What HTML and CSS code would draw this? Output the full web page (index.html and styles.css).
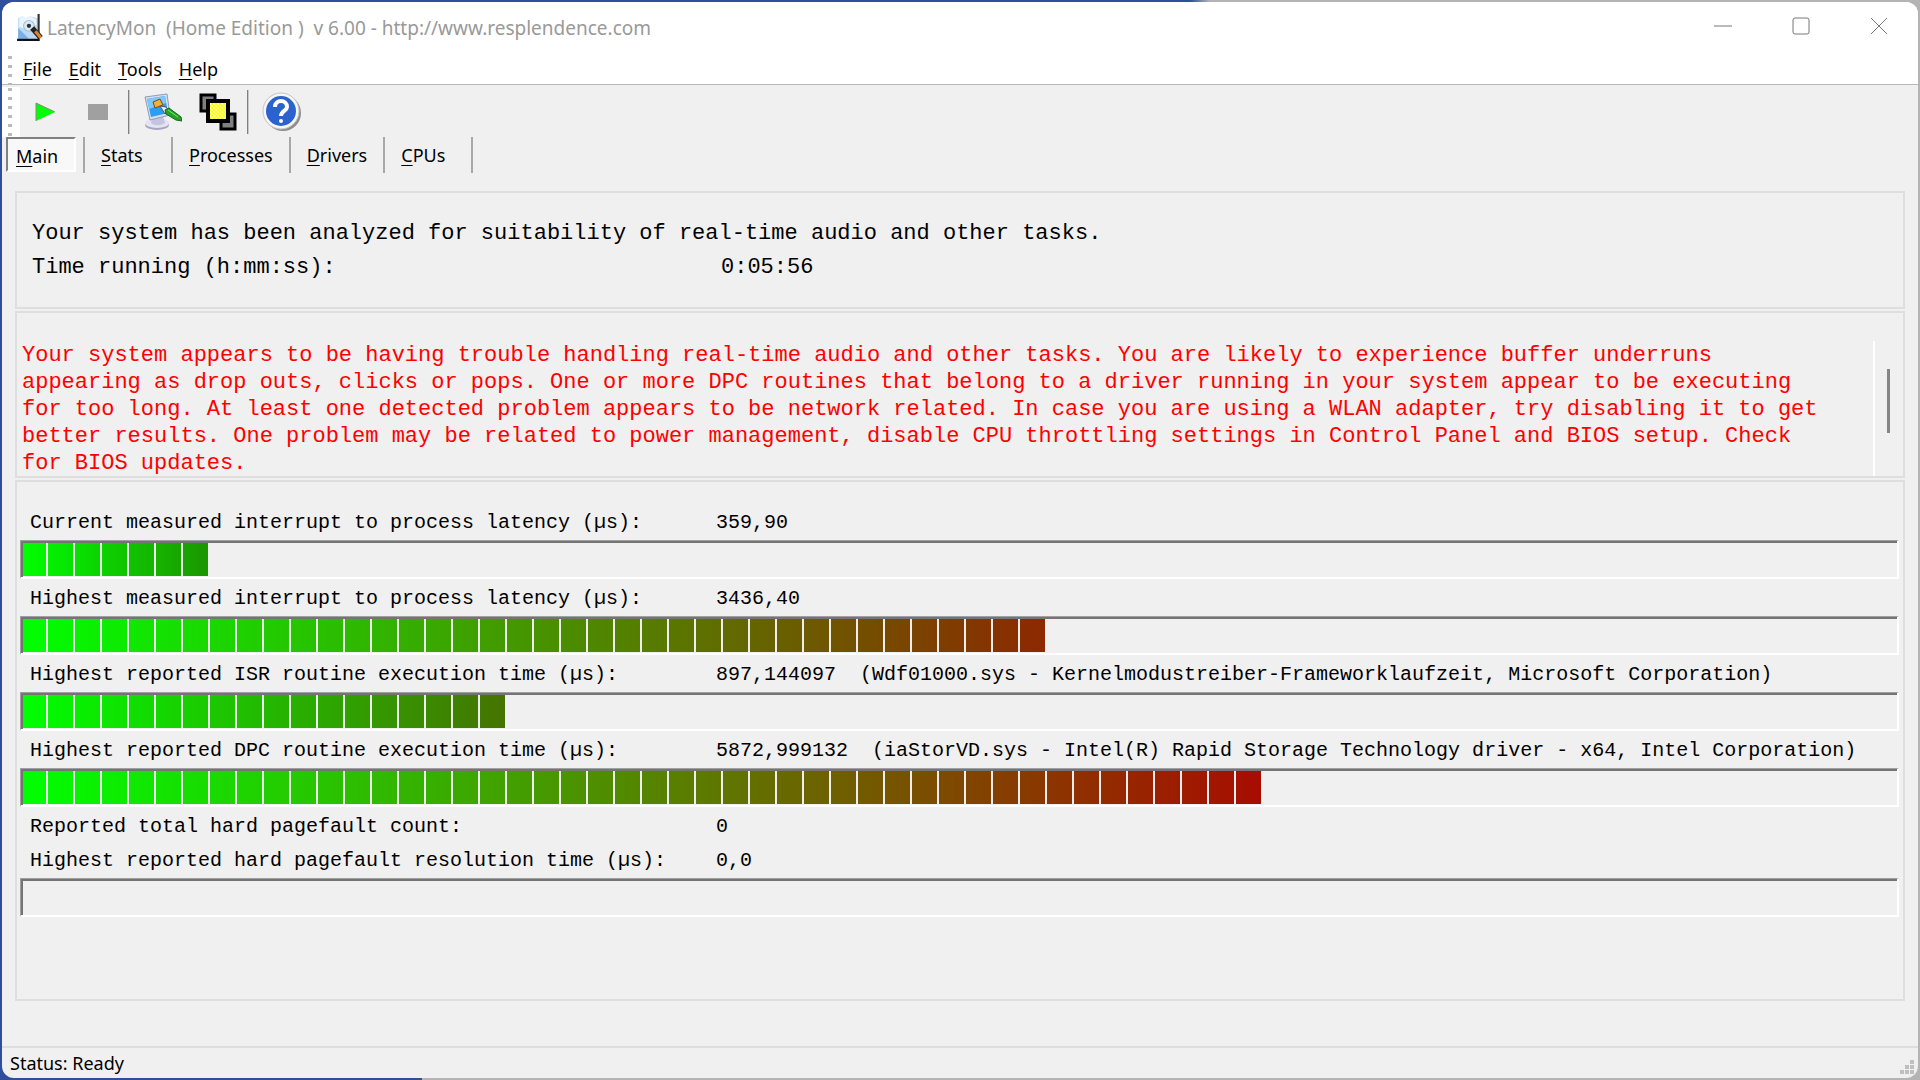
FILE: index.html
```html
<!DOCTYPE html>
<html lang="en">
<head>
    <meta charset="UTF-8">
    <meta name="viewport" content="width=device-width, initial-scale=1.0">
    <title>LatencyMon</title>
    <link rel="stylesheet" href="styles.css">
</head>
<body>
    <div class="window">
        <header class="titlebar">
            <svg class="app-icon" viewBox="0 0 24 26" aria-hidden="true">
                <path d="M1 4l4-2 3 2 4-2 7 2v20H1z" fill="#b9d9f7"/>
                <path d="M2 4l3-2 3 2 4-2 6 3v5l-10 4-6-2z" fill="#e9f4ff"/>
                <path d="M1 13l10 10H1z" fill="#79aeea"/>
                <path d="M0 23h21v2H0z" fill="#111"/>
                <path d="M19 0h2v23h-2z" fill="#333"/>
                <circle cx="11" cy="11" r="5" fill="#dce9ee" stroke="#a9bdc9"/>
                <circle cx="11" cy="11" r="2" fill="#234"/>
                <path d="M14 13l8 9" stroke="#222" stroke-width="5"/>
                <path d="M17 16l5 6" stroke="#d8862b" stroke-width="3"/>
            </svg>
            <h1 class="title">LatencyMon&nbsp; (Home Edition )&nbsp; v 6.00 - http://www.resplendence.com</h1>
            <div class="window-buttons">
                <button type="button" aria-label="Minimize"><svg viewBox="0 0 18 18"><path d="M0 9h18"/></svg></button>
                <button type="button" aria-label="Maximize"><svg viewBox="0 0 18 18"><rect x="1" y="1" width="16" height="16" rx="2"/></svg></button>
                <button type="button" aria-label="Close"><svg viewBox="0 0 18 18"><path d="M1 1l16 16M17 1L1 17"/></svg></button>
            </div>
        </header>

        <nav class="menubar">
            <a href="#file"><u>F</u>ile</a>
            <a href="#edit"><u>E</u>dit</a>
            <a href="#tools"><u>T</u>ools</a>
            <a href="#help"><u>H</u>elp</a>
        </nav>

        <div class="toolbar">
            <button type="button" class="tool tool-play" aria-label="Start">
                <svg width="20" height="20" viewBox="0 0 20 20"><path d="M1 1v18L20 10z" fill="#0f0"/><path d="M1 19V1l19 9" fill="none" stroke="#888" stroke-width="1"/></svg>
            </button>
            <button type="button" class="tool tool-stop" aria-label="Stop">
                <svg width="20" height="16" viewBox="0 0 20 16"><path d="M0 0h20v16H0z" fill="#a0a0a0"/></svg>
            </button>
            <span class="separator"></span>
            <button type="button" class="tool tool-options" aria-label="Options">
                <svg width="38" height="38" viewBox="0 0 38 38">
                    <ellipse cx="13" cy="32" rx="12" ry="5" fill="#a5a5c0"/>
                    <ellipse cx="13" cy="30" rx="12" ry="5" fill="#e3e3f3"/>
                    <path d="M8 23h11l2 7c-4 3-11 3-14 0z" fill="#c4c4de"/>
                    <path d="M1 4l22-3 3 21-20 5z" fill="#d6def0" stroke="#8e9cb8"/>
                    <path d="M3 6l18-3 3 17-17 4z" fill="#2a9df4"/>
                    <path d="M3 6l18-3 1 7-17 6z" fill="#7cc8fb"/>
                    <path d="M9 9l7-3 3 6-8 3z" fill="#f0ae3a" stroke="#7a4a10"/>
                    <path d="M16 13l6 1 3 4-4 3z" fill="#e7eef5" stroke="#556"/>
                    <path d="M21 17l4-2 12 9 1 4-6-1-10-6z" fill="#25a325" stroke="#0b6d12"/>
                    <path d="M24 17l10 7" stroke="#7fe07f"/>
                </svg>
            </button>
            <button type="button" class="tool tool-windows" aria-label="Windows">
                <svg width="38" height="38" viewBox="0 0 38 38">
                    <defs>
                        <pattern id="dither" width="4" height="4" patternUnits="userSpaceOnUse">
                            <path d="M0 0h4v4H0z" fill="#ff0"/>
                            <path d="M0 0h2v2H0zM2 2h2v2H2z" fill="#ffffa0"/>
                        </pattern>
                    </defs>
                    <path d="M2 2h14v16H2z" fill="#808080" stroke="#000" stroke-width="3"/>
                    <path d="M22 21h14v15H22z" fill="#808080" stroke="#000" stroke-width="3"/>
                    <path d="M9 8h20v20H9z" fill="url(#dither)" stroke="#000" stroke-width="4"/>
                </svg>
            </button>
            <span class="separator"></span>
            <button type="button" class="tool tool-help" aria-label="Help">
                <svg width="40" height="40" viewBox="0 0 40 40">
                    <circle cx="21" cy="21" r="18" fill="#8c8c8c"/>
                    <circle cx="19" cy="19" r="18" fill="#f6f6f6" stroke="#c4c4c4"/>
                    <circle cx="19" cy="19" r="15" fill="#2b62d0"/>
                    <path d="M13 15c0-8 12-8 12 0 0 4-6 4-6 9" fill="none" stroke="#fff" stroke-width="4"/>
                    <circle cx="19" cy="29" r="2" fill="#fff"/>
                </svg>
            </button>
        </div>

        <nav class="tabs">
            <button type="button" class="tab active"><u>M</u>ain</button>
            <span class="tab-divider"></span>
            <button type="button" class="tab"><u>S</u>tats</button>
            <button type="button" class="tab"><u>P</u>rocesses</button>
            <button type="button" class="tab"><u>D</u>rivers</button>
            <button type="button" class="tab"><u>C</u>PUs</button>
        </nav>

        <main class="content">
            <section class="panel summary">
                <p>Your system has been analyzed for suitability of real-time audio and other tasks.</p>
                <p class="row"><span class="label">Time running (h:mm:ss):</span><span>0:05:56</span></p>
            </section>

            <section class="panel warning">
                <p class="warning-text">Your system appears to be having trouble handling real-time audio and other tasks. You are likely to experience buffer underruns appearing as drop outs, clicks or pops. One or more DPC routines that belong to a driver running in your system appear to be executing for too long. At least one detected problem appears to be network related. In case you are using a WLAN adapter, try disabling it to get better results. One problem may be related to power management, disable CPU throttling settings in Control Panel and BIOS setup. Check for BIOS updates.</p>
                <div class="scrollbar"><div class="thumb"></div></div>
            </section>

            <section class="panel measurements">
                <p class="row"><span class="label">Current measured interrupt to process latency (µs):</span><span>359,90</span></p>
                <div class="meter"><div class="fill" style="--blocks: 7; --end: #1c9600"></div></div>
                <p class="row"><span class="label">Highest measured interrupt to process latency (µs):</span><span>3436,40</span></p>
                <div class="meter"><div class="fill" style="--blocks: 38; --end: #8d2800"></div></div>
                <p class="row"><span class="label">Highest reported ISR routine execution time (µs):</span><span>897,144097&nbsp; (Wdf01000.sys - Kernelmodustreiber-Frameworklaufzeit, Microsoft Corporation)</span></p>
                <div class="meter"><div class="fill" style="--blocks: 18; --end: #467300"></div></div>
                <p class="row"><span class="label">Highest reported DPC routine execution time (µs):</span><span>5872,999132&nbsp; (iaStorVD.sys - Intel(R) Rapid Storage Technology driver - x64, Intel Corporation)</span></p>
                <div class="meter"><div class="fill" style="--blocks: 46; --end: #a80c00"></div></div>
                <p class="row"><span class="label">Reported total hard pagefault count:</span><span>0</span></p>
                <p class="row"><span class="label">Highest reported hard pagefault resolution time (µs):</span><span>0,0</span></p>
                <div class="meter"></div>
            </section>
        </main>

        <footer class="statusbar">
            <span>Status: Ready</span>
            <svg class="grip" width="14" height="14" viewBox="0 0 14 14" aria-hidden="true">
                <path d="M10 0h4v4h-4zM5 5h4v4H5zM10 5h4v4h-4zM0 10h4v4H0zM5 10h4v4H5zM10 10h4v4h-4z" fill="#bfbfbf"/>
            </svg>
        </footer>
    </div>
</body>
</html>
```

FILE: styles.css
```css
* {
    box-sizing: border-box;
}

body {
    margin: 0;
    min-height: 100vh;
    display: flex;
    padding: 2px;
    background:
        linear-gradient(to right, #2f4f9c 22%, #b4b4b4 22%) bottom / 100% 20px no-repeat,
        linear-gradient(to right, #2f4f9c 62%, #b4b4b4 63%);
    font-family: "Noto Sans", sans-serif;
    font-size: 18px;
    color: #000;
}

p, h1 {
    margin: 0;
}

button {
    font: inherit;
    color: inherit;
    background: none;
    border: 0;
    padding: 0;
}

.window {
    flex: 1;
    display: flex;
    flex-direction: column;
    background: #f0f0f0;
    border-radius: 12px;
    overflow: hidden;
}

/* title bar */
.titlebar {
    display: flex;
    align-items: center;
    height: 51px;
    padding-left: 15px;
    background: #fff;
}

.app-icon {
    width: 26px;
    height: 28px;
    margin-right: 4px;
}

.title {
    flex: 1;
    font-size: 19px;
    font-weight: 400;
    color: #999;
}

.window-buttons {
    display: flex;
}

.window-buttons button {
    width: 78px;
    height: 48px;
}

.window-buttons svg {
    width: 18px;
    height: 18px;
    fill: none;
    stroke: #777;
    stroke-width: 1;
}

/* menu */
.menubar {
    display: flex;
    align-items: center;
    gap: 17px;
    height: 32px;
    padding-left: 21px;
    background: radial-gradient(circle, #bbb 2px, transparent 2px) 4px 0 / 8px 9px repeat-y #fff;
    border-bottom: 1px solid #b4b8bb;
}

.menubar a {
    color: #000;
    text-decoration: none;
}

.menubar u, .tab u {
    text-underline-offset: 3px;
}

/* toolbar */
.toolbar {
    display: flex;
    align-items: center;
    height: 52px;
    padding: 2px 0 0 33px;
    background:
        radial-gradient(circle, #bbb 2px, transparent 2px) 4px 0 / 8px 9px repeat-y,
        linear-gradient(#fff, #fff) 0 2px / 18px 50px no-repeat;
}

.tool {
    display: flex;
}

.tool-stop {
    margin: 0 20px 0 33px;
}

.tool-options {
    margin: 0 17px 0 14px;
}

.tool-windows {
    margin-right: 10px;
}

.tool-help {
    margin-left: 13px;
}

.separator {
    width: 2px;
    height: 44px;
    border-left: 1px solid #808080;
    border-right: 1px solid #c8c8c8;
}

/* tabs */
.tabs {
    display: flex;
    height: 36px;
    padding-left: 4px;
}

.tab {
    min-width: 88px;
    padding: 0 16px;
    border-right: 2px solid #a8a8a8;
    text-align: left;
}

.tab.active {
    min-width: 70px;
    height: 35px;
    padding: 2px 0 0 8px;
    background: #f8f8f8;
    border: 2px solid;
    border-color: #808080 #fff #fff #808080;
}

.tab-divider {
    width: 9px;
    border-right: 2px solid #a8a8a8;
}

/* panels */
.content {
    flex: 1;
    display: flex;
    flex-direction: column;
    gap: 2px;
    padding: 18px 13px 0 13px;
    font-family: "Liberation Mono", monospace;
    font-size: 20px;
}

.panel {
    border: 2px solid #dedede;
}

.row {
    display: flex;
    white-space: nowrap;
}

.summary {
    height: 118px;
    padding: 24px 15px;
    font-size: 22px;
    line-height: 34px;
}

.summary .label {
    width: 689px;
}

.warning {
    display: flex;
    justify-content: space-between;
    height: 167px;
    padding: 28px 0 0 5px;
    font-size: 22px;
    line-height: 27px;
    color: #f00;
}

.warning-text {
    max-width: 137ch;
    padding-top: 1px;
}

.scrollbar {
    width: 30px;
    border-left: 2px solid #fff;
    padding: 28px 0 0 12px;
}

.thumb {
    width: 3px;
    height: 64px;
    background: #858585;
}

.measurements {
    height: 521px;
    padding: 24px 4px 24px 3px;
}

.measurements .row {
    padding-left: 10px;
    line-height: 34px;
}

.measurements .label {
    width: 686px;
}

/* sunken bar, dark on the top and left */
.meter {
    height: 39px;
    margin-bottom: 3px;
    padding: 2px 0 1px 2px;
    border: solid;
    border-width: 1px 2px 2px 1px;
    border-color: #a0a0a0 #fff #fff #a0a0a0;
    box-shadow: inset 2px 2px #747474;
}

/* each block is 27px wide with its divider */
.fill {
    width: calc(var(--blocks) * 27px - 4px);
    height: 100%;
    background:
        repeating-linear-gradient(to right, transparent 0 23px, #eee 23px 25px, transparent 25px 27px),
        linear-gradient(to right, #0f0, var(--end));
}

/* status bar */
.statusbar {
    display: flex;
    justify-content: space-between;
    align-items: center;
    height: 32px;
    padding: 0 4px 0 8px;
    border-top: 2px solid #dedede;
}

.grip {
    align-self: flex-end;
    margin-bottom: 4px;
}
```
